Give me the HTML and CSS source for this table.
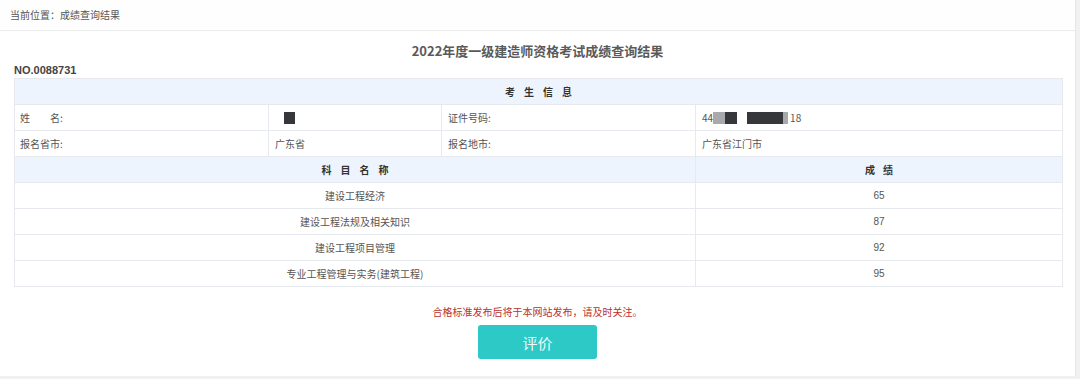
FILE: index.html
```html
<!DOCTYPE html>
<html lang="zh-CN">
<head>
<meta charset="utf-8">
<title>成绩查询结果</title>
<link rel="stylesheet" href="styles.css">
</head>
<body>
<div class="panel">
  <div class="crumb">当前位置：成绩查询结果</div>
  <h1 class="title">2022年度一级建造师资格考试成绩查询结果</h1>
  <div class="serial">NO.0088731</div>
  <table class="result">
    <colgroup>
      <col class="c1"><col class="c2"><col class="c3"><col class="c4">
    </colgroup>
    <tr class="head"><th colspan="4" class="spaced">考生信息</th></tr>
    <tr>
      <td>姓&emsp;&emsp;名:</td>
      <td><span class="mask dark sq"></span></td>
      <td>证件号码:</td>
      <td>44<span class="mask grey w12 lead"></span><span class="mask dark w12"></span><span class="gap"></span><span class="mask dark w36"></span><span class="mask grey w5"></span>18</td>
    </tr>
    <tr>
      <td>报名省市:</td>
      <td>广东省</td>
      <td>报名地市:</td>
      <td>广东省江门市</td>
    </tr>
    <tr class="head">
      <th colspan="3" class="spaced">科目名称</th>
      <th class="spaced2">成绩</th>
    </tr>
    <tr class="sub"><td colspan="3">建设工程经济</td><td>65</td></tr>
    <tr class="sub"><td colspan="3">建设工程法规及相关知识</td><td>87</td></tr>
    <tr class="sub"><td colspan="3">建设工程项目管理</td><td>92</td></tr>
    <tr class="sub"><td colspan="3">专业工程管理与实务(建筑工程)</td><td>95</td></tr>
  </table>
  <p class="note">合格标准发布后将于本网站发布，请及时关注。</p>
  <div class="actions"><button class="btn" type="button">评价</button></div>
</div>
</body>
</html>
```

FILE: styles.css
```css
html, body {
  margin: 0;
  padding: 0;
}
body {
  background: #f1f1f1;
  font-family: "Noto Sans CJK SC", "Liberation Sans", sans-serif;
  color: #555;
  width: 1080px;
  height: 379px;
  overflow: hidden;
}
.panel {
  width: 1076px;
  height: 376px;
  background: #fff;
  box-sizing: border-box;
  border-right: 1px solid #e6e6e6;
  display: flex;
  flex-direction: column;
}
.crumb {
  height: 30px;
  line-height: 30px;
  padding-left: 10px;
  font-size: 10px;
  color: #555;
  border-bottom: 1px solid #ececec;
  background: #fefefe;
}
.title {
  margin: 10px 0 0;
  height: 20px;
  line-height: 20px;
  font-size: 13px;
  font-weight: bold;
  color: #5a5a5a;
  text-align: center;
}
.serial {
  margin: 2px 0 0 14px;
  height: 14px;
  line-height: 14px;
  font-family: "Liberation Sans", Arial, sans-serif;
  font-size: 11px;
  font-weight: bold;
  color: #444;
}
.result {
  margin: 1px 0 0 14px;
  width: 1048px;
  border-collapse: collapse;
  table-layout: fixed;
  font-size: 10px;
  border: 1px solid #dfe3e8;
}
.c1 { width: 254px; }
.c2 { width: 173px; }
.c3 { width: 254px; }
.c4 { width: 367px; }
.result tr {
  height: 26px;
}
.result th,
.result td {
  padding: 0 6px;
  border: 1px solid #e6e9ed;
  text-align: left;
  vertical-align: middle;
  white-space: nowrap;
  overflow: hidden;
  color: #555;
}
.result td:first-child {
  padding-left: 5px;
}
.result .head th {
  background: #edf4fd;
  text-align: center;
  font-weight: bold;
  color: #333;
}
.spaced {
  letter-spacing: 9px;
  text-indent: 9px;
}
.spaced2 {
  letter-spacing: 8px;
  text-indent: 8px;
}
.result .sub td {
  text-align: center;
  padding: 0;
}
.result .sub td:last-child {
  font-family: "Liberation Sans", Arial, sans-serif;
  font-size: 10px;
}
.mask {
  display: inline-block;
  height: 12px;
  vertical-align: -2px;
}
.dark { background: #35373b; }
.grey { background: #a7a9ab; }
.sq { width: 11px; margin-left: 9px; }
.lead { margin-left: 0; }
.w12 { width: 12px; }
.w36 { width: 36px; }
.w5 { width: 5px; margin-right: 2px; }
.gap { display: inline-block; width: 10px; }
.note {
  margin: 18px 0 0;
  height: 14px;
  line-height: 14px;
  text-align: center;
  font-size: 10px;
  color: #b83330;
}
.actions {
  display: flex;
  justify-content: center;
  margin-top: 6px;
}
.btn {
  width: 119px;
  height: 34px;
  border: none;
  border-radius: 3px;
  background: #2dc9c6;
  color: #eafafa;
  font-family: "Noto Sans CJK SC", sans-serif;
  font-size: 15px;
  padding: 0;
}
```
